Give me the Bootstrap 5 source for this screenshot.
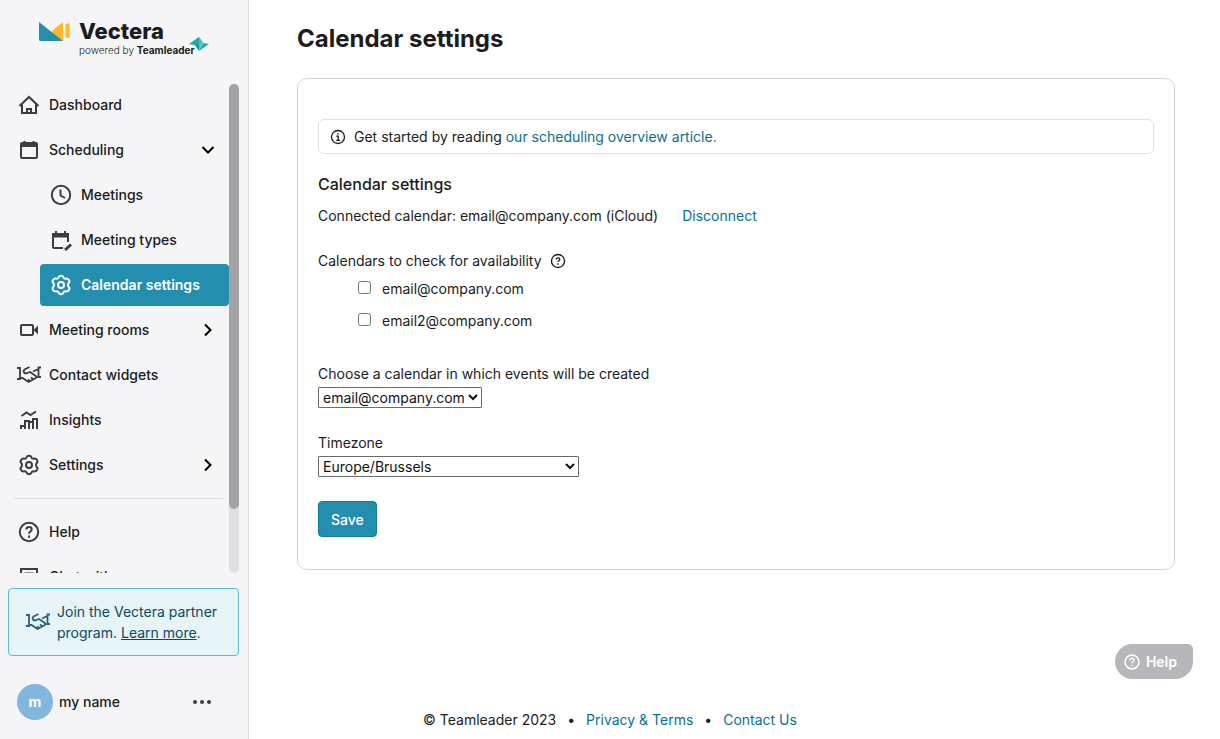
<!DOCTYPE html>
<html lang="en">
<head>
<meta charset="utf-8">
<meta name="viewport" content="width=device-width, initial-scale=1">
<title>Calendar settings - Vectera</title>
<link href="https://cdn.jsdelivr.net/npm/bootstrap@5.3.0/dist/css/bootstrap.min.css" rel="stylesheet">
<style>
  :root { --side: 249px; --teal: #248eae; --link: #0b6f8f; --ink: #1a1c20; }
  body { font-family: Inter, "Liberation Sans", sans-serif; font-size: 14px; line-height: 21px; color: var(--ink); background: #fff; }
  a { color: var(--link); text-decoration: none; }
  svg { flex: none; display: block; }
  .ico { width: 24px; height: 24px; fill: none; stroke: currentColor; stroke-width: 2; }

  .sidebar { width: var(--side); background: #f5f5f8; border-right: 1px solid #dcdde0; }
  .brand { height: 84px; padding: 19px 0 0 39px; color: var(--ink); }
  .brand-text { padding-left: 9px; }
  .brand-name { font-size: 22px; line-height: 24px; font-weight: 800; }
  .brand-sub { font-size: 10px; line-height: 14px; font-weight: 300; }
  .brand-sub b { font-weight: 700; }
  .brand-bird { margin: 16px 0 0 -6px; }
  .scroller { margin-right: 9px; min-height: 0; }
  .side-nav { min-width: 0; }
  .side-group { gap: 3px; }
  .side-link { height: 42px; flex: none; gap: 8px; padding: 0 9px 0 17px; border-radius: 4px; font-weight: 500; line-height: 22px; color: var(--ink); }
  .side-link .ico { color: #3c3d42; }
  .side-link .chev { color: #000; }
  .side-sub { margin-left: 40px; padding-left: 9px; }
  .side-link.current { background: var(--teal); color: #fff; font-weight: 600; }
  .side-link.current .ico { color: #fff; }
  .side-rule { margin: 12px 6px 12px 14px; border-top: 1px solid #d9dade; opacity: 1; flex: none; }
  .track { width: 10px; background: #dedfe1; border-radius: 5px; }
  .thumb { height: 87%; background: #a2a3a5; border-radius: 5px; }
  .promo { margin: 15px 9px 0 8px; padding: 12px 12px 12px 17px; gap: 7px; background: #e6f3f7; border: 1px solid #5dbcd2; border-radius: 4px; color: #0d4a5f; }
  .promo a { color: inherit; text-decoration: underline; }
  .promo .ico { color: #2b6279; }
  .account { padding: 28px 36px 19px 17px; gap: 6px; font-weight: 500; line-height: 22px; }
  .avatar { width: 36px; height: 36px; background: #82b6dd; color: #fff; font-weight: 700; }
  .more { color: #3c3d42; }

  main { margin-left: var(--side); padding: 21px 45px 24px 48px; }
  h1 { font-size: 24px; line-height: 36px; font-weight: 700; margin: 0 0 21px; }
  .panel { border: 1px solid #cbd3d8; border-radius: 10px; padding: 40px 20px 32px; }
  .notice { border: 1px solid #dcdfe2; border-radius: 6px; padding: 6px 11px; gap: 8px; margin-bottom: 18px; }
  h2 { font-size: 16px; line-height: 24px; font-weight: 500; margin: 0 0 9px; }
  .picks { margin: 2px 0 26px 40px; }
  .pick { height: 32px; gap: 11px; line-height: 22px; }
  .pick input { width: 13px; height: 13px; margin: 0 0 3px; }
  .plain-select { display: block; height: 21px; margin-top: 3px; padding: 0; background: #fff; border: 1px solid #6b6b6b; border-radius: 1px; color: #111; font-size: 14px; }
  .zone { width: 261px; }
  .btn-save { background: var(--teal); border: 1px solid #117b9c; border-radius: 4px; color: #fff; font-size: 14px; line-height: 21px; font-weight: 500; height: 36px; padding: 0 12px; }
  .btn-save:hover { background: #117b9c; color: #fff; }
  footer { gap: 11px; padding-bottom: 9px; }
  .help-tab { right: 27px; bottom: 60px; height: 35px; padding: 0 16px 0 8px; gap: 5px; border: 0; border-radius: 18px 5px 18px 18px; background: #b7b6bb; color: #fff; font-weight: 600; line-height: 22px; }
  .help-tab .ico { width: 18px; height: 18px; }
</style>
</head>
<body>
<svg class="d-none" aria-hidden="true">
  <symbol id="i-gear" viewBox="0 0 24 24"><path stroke-linejoin="round" d="M12 2.800c1.500 0 2.200.6 2.600 1.800.3.8 1 1.200 1.900 1.100 1.600-.3 2.700.1 3.500 1.400.8 1.400.6 2.300-.4 3.200-.8.8-.8 2.600 0 3.400 1 .9 1.200 1.800.4 3.200-.8 1.300-1.900 1.700-3.500 1.400-.9-.1-1.600.3-1.900 1.100-.4 1.200-1.100 1.800-2.600 1.800s-2.200-.6-2.600-1.800c-.3-.8-1-1.200-1.900-1.100-1.600.3-2.700-.1-3.500-1.400-.8-1.400-.6-2.300.4-3.200.8-.8.8-2.600 0-3.400-1-.9-1.200-1.800-.4-3.200.8-1.300 1.900-1.700 3.500-1.400.9.1 1.600-.3 1.900-1.100.4-1.200 1.100-1.800 2.600-1.800z"/><circle cx="12" cy="12" r="3"/></symbol>
  <symbol id="i-shake" viewBox="0 0 24 24"><path stroke-width="1.800" d="M0 5h3v11H0M24 4.500h-2.500V14H24M3 15h2.500l6 4 6.500-3.500 2.500-2M12.500 4 7.500 6.500Q6 8 7 9.500q1.500 1.500 3.500.5l2.500-1 6.500 4.500M21.500 6 16 8.500M11 16.500l2.500 1.800M14 14.500l2.500 2"/></symbol>
  <symbol id="i-right" viewBox="0 0 24 24"><path d="m9 6.500 5.500 5.500L9 17.500"/></symbol>
  <symbol id="i-ask" viewBox="0 0 24 24"><circle cx="12" cy="12" r="9.200"/><path d="M9.300 9.600c0-1.600 1.100-2.600 2.700-2.600s2.700 1 2.700 2.400c0 2-2.700 2.200-2.700 4.300M12 15.600v2.200"/></symbol>
</svg>

<div class="d-flex flex-column min-vh-100">
  <aside class="sidebar position-fixed top-0 start-0 vh-100 d-flex flex-column">
    <a class="brand d-flex flex-shrink-0" href="#">
      <svg width="31" height="24" viewBox="0 0 31 24"><path fill="#ffb82e" d="M13 12 24 3v19H13zM26.500 5.500 30.500 4v15.500l-4-1.500z"/><path fill="#248eae" d="M0 3l24 19H1.500Q0 22 0 20.500z"/></svg>
      <span class="brand-text d-flex flex-column">
        <span class="brand-name">Vectera</span>
        <span class="brand-sub d-flex">powered by&nbsp;<b>Teamleader</b></span>
      </span>
      <svg class="brand-bird" width="20" height="18" viewBox="0 0 20 18"><path fill="#1fa9a5" d="M0 9 10 2v9z"/><path fill="#46c8c1" d="m10 2 4 5-4 9z"/><path fill="#1fa9a5" d="m10 16 4-8 6 1z"/><path fill="#178f90" d="M6 10h4v6z"/></svg>
    </a>

    <div class="scroller d-flex flex-grow-1">
      <nav class="side-nav flex-grow-1 overflow-hidden d-flex flex-column">
        <div class="side-group d-flex flex-column">
          <a class="side-link d-flex align-items-center" href="#"><svg class="ico" viewBox="0 0 24 24"><path d="M2.500 13 12 4l9.500 9M5 11.500V20h14v-8.500M10 20v-4h4v4"/></svg>Dashboard</a>
          <a class="side-link d-flex align-items-center" href="#"><svg class="ico" viewBox="0 0 24 24"><rect x="4" y="5" width="16" height="15" rx="1"/><path stroke-width="4" d="M4 7h16"/><path d="M7.500 3v3M16.500 3v3"/></svg>Scheduling<svg class="ico chev ms-auto" viewBox="0 0 24 24"><path d="m6.500 9 5.500 5.500L17.500 9"/></svg></a>
          <a class="side-link side-sub d-flex align-items-center" href="#"><svg class="ico" viewBox="0 0 24 24"><circle cx="12" cy="12" r="9.200"/><path d="M11.500 6.500v6l4.500 2.500"/></svg>Meetings</a>
          <a class="side-link side-sub d-flex align-items-center" href="#"><svg class="ico" viewBox="0 0 24 24"><path d="M14 20H5q-1 0-1-1V6h15v8"/><path stroke-width="4" d="M3 7.500h17"/><path d="M7 3v3M16 3v3"/><path stroke-width="3" d="m16 22 6-5.500"/></svg>Meeting types</a>
          <a class="side-link side-sub current d-flex align-items-center" href="#" aria-current="page"><svg class="ico"><use href="#i-gear"/></svg>Calendar settings</a>
          <a class="side-link d-flex align-items-center" href="#"><svg class="ico" viewBox="0 0 24 24"><rect x="4" y="7" width="12" height="10" rx="1"/><path fill="currentColor" stroke="none" d="m16.500 12 4.500-4.500v9z"/></svg>Meeting rooms<svg class="ico chev ms-auto"><use href="#i-right"/></svg></a>
          <a class="side-link d-flex align-items-center" href="#"><svg class="ico"><use href="#i-shake"/></svg>Contact widgets</a>
          <a class="side-link d-flex align-items-center" href="#"><svg class="ico" viewBox="0 0 24 24"><path d="m4.500 8 5-3.500 4 2.500L19 3.500M4 21v-3h4v3M8 18v-5h4v8M12 14h4v7M16 14v-3h4v10"/></svg>Insights</a>
          <a class="side-link d-flex align-items-center" href="#"><svg class="ico"><use href="#i-gear"/></svg>Settings<svg class="ico chev ms-auto"><use href="#i-right"/></svg></a>
        </div>
        <hr class="side-rule">
        <div class="side-group d-flex flex-column">
          <a class="side-link d-flex align-items-center" href="#"><svg class="ico"><use href="#i-ask"/></svg>Help</a>
          <a class="side-link d-flex align-items-center" href="#"><svg class="ico" viewBox="0 0 24 24"><path d="M4 22V4h16v14H8zM7.500 8.500h9M7.500 13h9"/></svg>Chat with us</a>
        </div>
      </nav>
      <div class="track" aria-hidden="true"><div class="thumb"></div></div>
    </div>

    <div class="promo d-flex align-items-center flex-shrink-0">
      <svg class="ico"><use href="#i-shake"/></svg>
      <div>Join the Vectera partner program. <a href="#">Learn more</a>.</div>
    </div>

    <div class="account d-flex align-items-center flex-shrink-0">
      <span class="avatar rounded-circle d-flex align-items-center justify-content-center">m</span>
      <span>my name</span>
      <button class="more btn p-0 border-0 ms-auto" type="button" aria-label="Account menu"><svg width="20" height="20" viewBox="0 0 20 20" fill="currentColor"><circle cx="3" cy="10" r="2"/><circle cx="10" cy="10" r="2"/><circle cx="17" cy="10" r="2"/></svg></button>
    </div>
  </aside>

  <main>
    <h1>Calendar settings</h1>
    <form class="panel">
      <div class="notice d-flex align-items-center">
        <svg width="16" height="16" viewBox="0 0 16 16" fill="none" stroke="currentColor" stroke-width="1.300"><circle cx="8" cy="8" r="6.500"/><path d="M6.300 7.200H8.200v4M6.200 11.300h4M8 4v1.500"/></svg>
        <div>Get started by reading <a href="#">our scheduling overview article.</a></div>
      </div>
      <h2>Calendar settings</h2>
      <div class="d-flex flex-wrap gap-4 mb-4"><span>Connected calendar: email@company.com (iCloud)</span><a href="#">Disconnect</a></div>
      <div class="d-flex align-items-center gap-2">Calendars to check for availability
        <svg width="16" height="16" viewBox="0 0 24 24" fill="none" stroke="currentColor" stroke-width="2"><circle cx="12" cy="12" r="9.800"/><path d="M9.300 9.800c0-1.600 1.100-2.600 2.700-2.600s2.700 1 2.700 2.400c0 2-2.700 2-2.700 3.800M12 15.300v2.200"/></svg>
      </div>
      <div class="picks">
        <div class="pick d-flex align-items-center"><input type="checkbox" id="cal1"><label for="cal1">email@company.com</label></div>
        <div class="pick d-flex align-items-center"><input type="checkbox" id="cal2"><label for="cal2">email2@company.com</label></div>
      </div>
      <div class="mb-4">
        <label class="d-block" for="target">Choose a calendar in which events will be created</label>
        <select class="plain-select" id="target"><option>email@company.com</option></select>
      </div>
      <div class="mb-4">
        <label class="d-block" for="zone">Timezone</label>
        <select class="plain-select zone" id="zone"><option>Europe/Brussels</option></select>
      </div>
      <button class="btn btn-save d-block" type="button">Save</button>
    </form>
  </main>

  <footer class="mt-auto d-flex justify-content-center">
    <span>© Teamleader 2023</span><span>•</span><a href="#">Privacy &amp; Terms</a><span>•</span><a href="#">Contact Us</a>
  </footer>
</div>

<button class="help-tab position-fixed d-flex align-items-center" type="button"><svg class="ico"><use href="#i-ask"/></svg>Help</button>
<script src="https://cdn.jsdelivr.net/npm/bootstrap@5.3.0/dist/js/bootstrap.bundle.min.js"></script>
</body>
</html>
